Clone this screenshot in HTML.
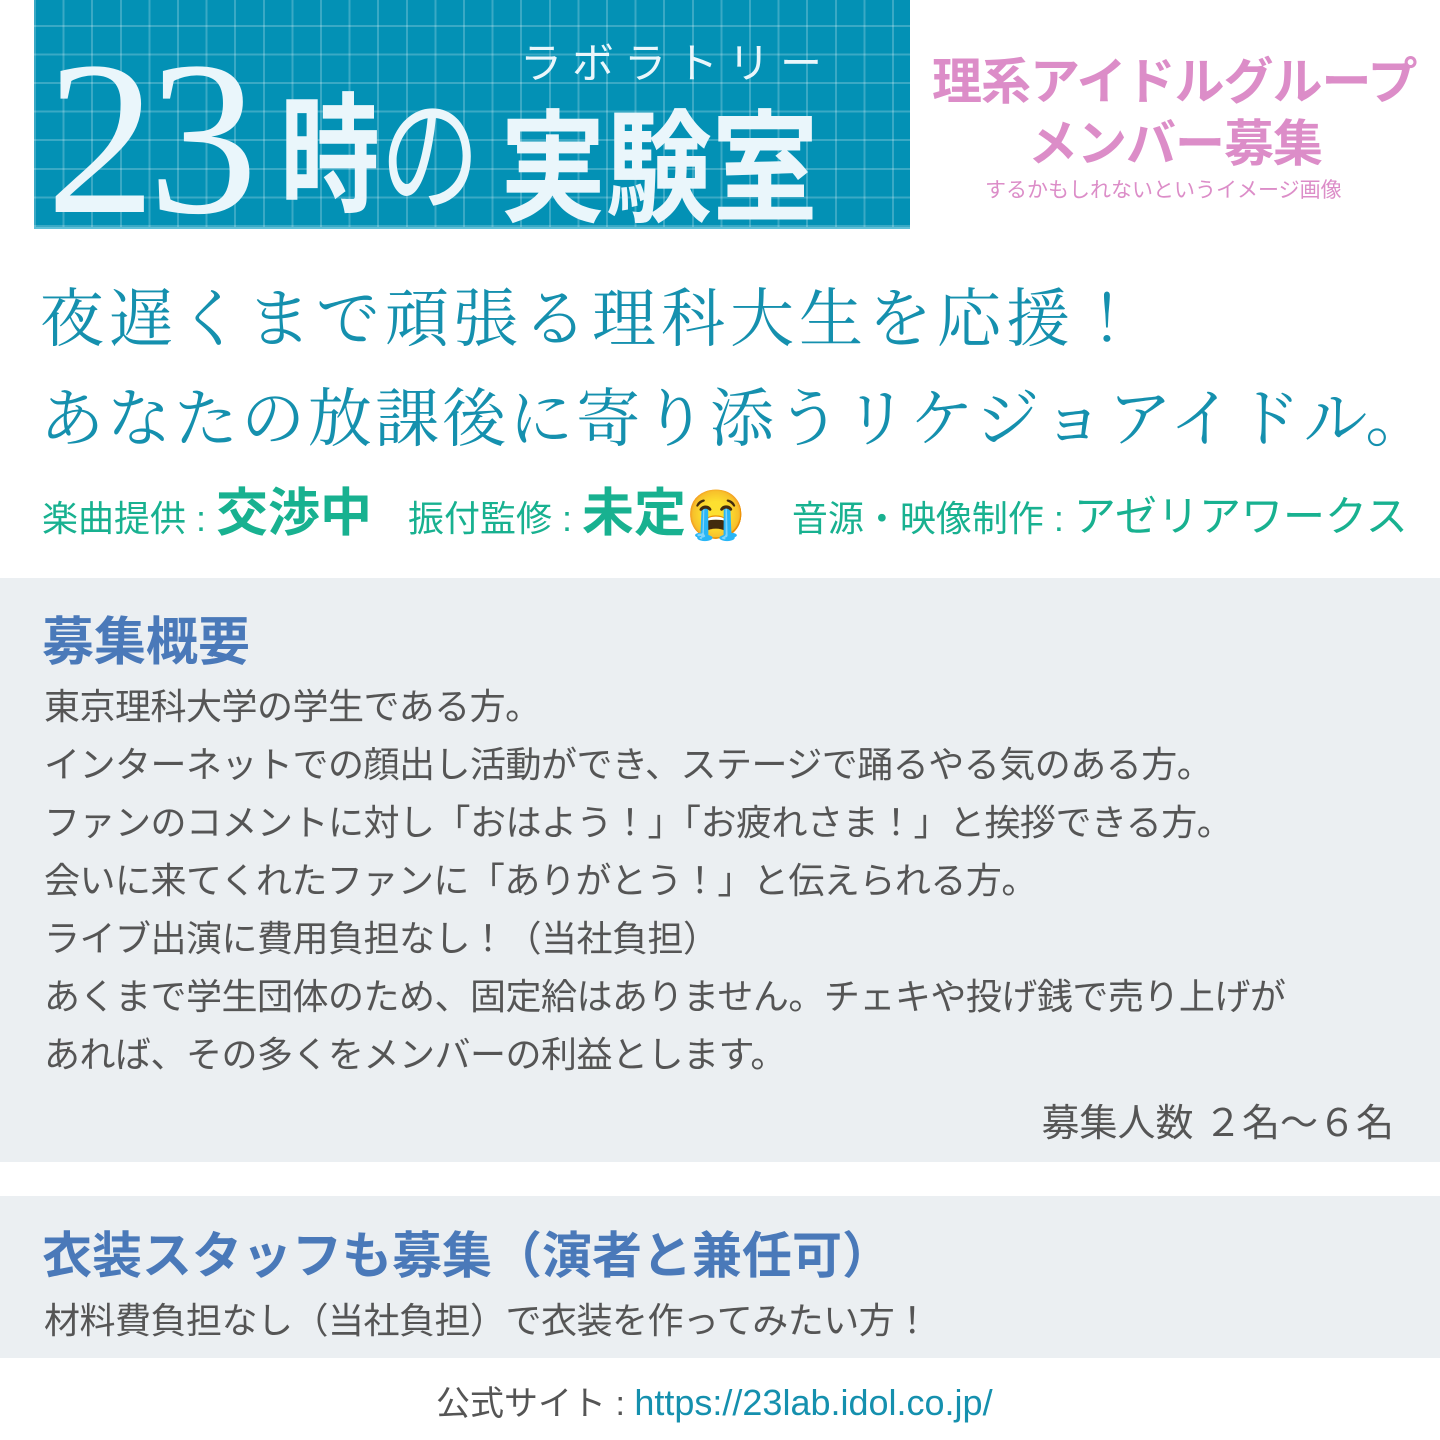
<!DOCTYPE html>
<html><head><meta charset="utf-8"><style>
*{margin:0;padding:0;box-sizing:border-box}
body{width:1440px;height:1440px;background:#fff;position:relative;overflow:hidden;font-family:"Liberation Sans","Noto Sans CJK JP",sans-serif}
.a{position:absolute;white-space:nowrap}
#hdr{left:34px;top:0;width:876px;height:229px;background:#0391b5;
background-image:repeating-linear-gradient(90deg,rgba(255,255,255,.22) 0 2px,transparent 2px 28.6px),repeating-linear-gradient(0deg,rgba(255,255,255,.22) 0 2px,transparent 2px 28.6px);background-color:#0391b5;border-bottom:2px solid #5fc0d8}
.w{color:#eaf6fb}
.serif{font-family:"Liberation Serif","Noto Serif CJK JP",serif}
.pk{color:#dc8dc8;font-weight:bold}
.hl{color:#1590ae;font-family:"Liberation Serif","Noto Serif CJK JP",serif;font-size:64px;left:40px}
.gr{color:#18b190}
.lb{font-size:36px}
.vl{font-size:52px;font-weight:bold}
.box{position:absolute;left:0;width:1440px;background:#ebeff2}
.tt{color:#4a79b9;font-weight:bold}
.bd{color:#555;font-size:36px;left:44px;letter-spacing:-0.5px}
</style></head><body>
<div class="a" id="hdr"></div>
<div class="a w serif" style="left:46px;top:28px;font-size:220px;line-height:220px;letter-spacing:-8px">23</div>
<div class="a w" style="left:280px;top:105px;font-size:100px;line-height:150px;font-weight:bold;transform:scaleY(1.3);transform-origin:0 100%">時<span style="font-weight:normal">の</span></div>
<div class="a w" style="left:500px;top:90px;font-size:106px;line-height:140px;font-weight:bold;transform:scaleY(1.15);transform-origin:0 0">実験室</div>
<div class="a w" style="left:520px;top:30px;font-size:42px;letter-spacing:10px">ラボラトリー</div>
<div class="a pk" style="left:932px;top:42px;font-size:50px;letter-spacing:-1px">理系アイドルグループ</div>
<div class="a pk" style="left:1028px;top:104px;font-size:50px;letter-spacing:-1px">メンバー募集</div>
<div class="a" style="left:985px;top:174px;font-size:21px;color:#dc8dc8">するかもしれないというイメージ画像</div>
<div class="a hl" style="top:268px;letter-spacing:5px">夜遅くまで頑張る理科大生を応援！</div>
<div class="a hl" style="top:368px;letter-spacing:3px">あなたの放課後に寄り添うリケジョアイドル。</div>
<div class="a gr" style="left:42px;top:478px;line-height:72px"><span class="lb">楽曲提供 : </span><span class="vl">交渉中</span><span class="lb">　振付監修 : </span><span class="vl">未定</span><span style="font-size:48px">😭</span><span class="lb">　 音源・映像制作 : </span><span style="font-size:42px">アゼリアワークス</span></div>
<div class="box" style="top:578px;height:584px"></div>
<div class="a tt" style="left:42px;top:600px;font-size:52px">募集概要</div>
<div class="a bd" style="top:678px;line-height:58px">東京理科大学の学生である方。<br>インターネットでの顔出し活動ができ、ステージで踊るやる気のある方。<br>ファンのコメントに対し「おはよう！」「お疲れさま！」と挨拶できる方。<br>会いに来てくれたファンに「ありがとう！」と伝えられる方。<br>ライブ出演に費用負担なし！（当社負担）<br>あくまで学生団体のため、固定給はありません。チェキや投げ銭で売り上げが<br>あれば、その多くをメンバーの利益とします。</div>
<div class="a" style="right:46px;top:1092px;font-size:38px;color:#555">募集人数 ２名〜６名</div>
<div class="box" style="top:1196px;height:162px"></div>
<div class="a tt" style="left:42px;top:1216px;font-size:50px">衣装スタッフも募集（演者と兼任可）</div>
<div class="a bd" style="top:1292px">材料費負担なし（当社負担）で衣装を作ってみたい方！</div>
<div class="a" style="left:436px;top:1376px;font-size:34px;color:#555">公式サイト : <span style="color:#1590ae;font-size:36px">https://23lab.idol.co.jp/</span></div>
</body></html>
